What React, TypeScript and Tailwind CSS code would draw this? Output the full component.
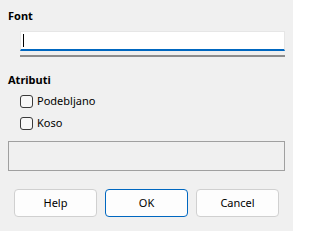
import React from "react";

export default function App() {
  return (
    <div
      className="w-[293px] h-[231px] bg-[#f0f0f0] text-[#000] overflow-hidden"
      style={{ fontFamily: '"Noto Sans", "Open Sans", sans-serif' }}
    >
      <div className="pt-[8px] pl-[8px] text-[11px] leading-[16px] font-bold">Font</div>
      <div className="ml-[20px] mt-[7px] w-[265px] h-[20px] bg-white border border-[#e6e6e6] border-b-[#0067c0] border-b-[2px] flex items-center pl-[2px]">
        <div className="w-[1px] h-[13px] bg-black" />
      </div>
      <div className="ml-[20px] mt-[4px] w-[265px] h-[2px] bg-[#8c8c8c]" />
      <div className="pt-[15px] pl-[8px] text-[11px] leading-[16px] font-bold">Atributi</div>
      <div className="pl-[20px] mt-[5px] flex flex-col gap-[6px]">
        <label className="flex items-center gap-[4px] h-[16px] text-[11px]">
          <span className="w-[13px] h-[13px] rounded-[3px] border border-[#3a3a3a] bg-[#f7f7f7]" />
          <span className="leading-[16px]">Podebljano</span>
        </label>
        <label className="flex items-center gap-[4px] h-[16px] text-[11px]">
          <span className="w-[13px] h-[13px] rounded-[3px] border border-[#3a3a3a] bg-[#f7f7f7]" />
          <span className="leading-[16px]">Koso</span>
        </label>
      </div>
      <div className="ml-[8px] mt-[10px] w-[277px] h-[30px] border border-[#a0a0a0]" />
      <div className="mt-[18px] pl-[14px] flex gap-[8px] text-[11px]">
        <button className="w-[83px] h-[28px] rounded-[4px] border border-[#d0d0d0] bg-[#fdfdfd]">Help</button>
        <button className="w-[83px] h-[28px] rounded-[4px] border border-[#0067c0] bg-[#fdfdfd]">OK</button>
        <button className="w-[83px] h-[28px] rounded-[4px] border border-[#d0d0d0] bg-[#fdfdfd]">Cancel</button>
      </div>
    </div>
  );
}
